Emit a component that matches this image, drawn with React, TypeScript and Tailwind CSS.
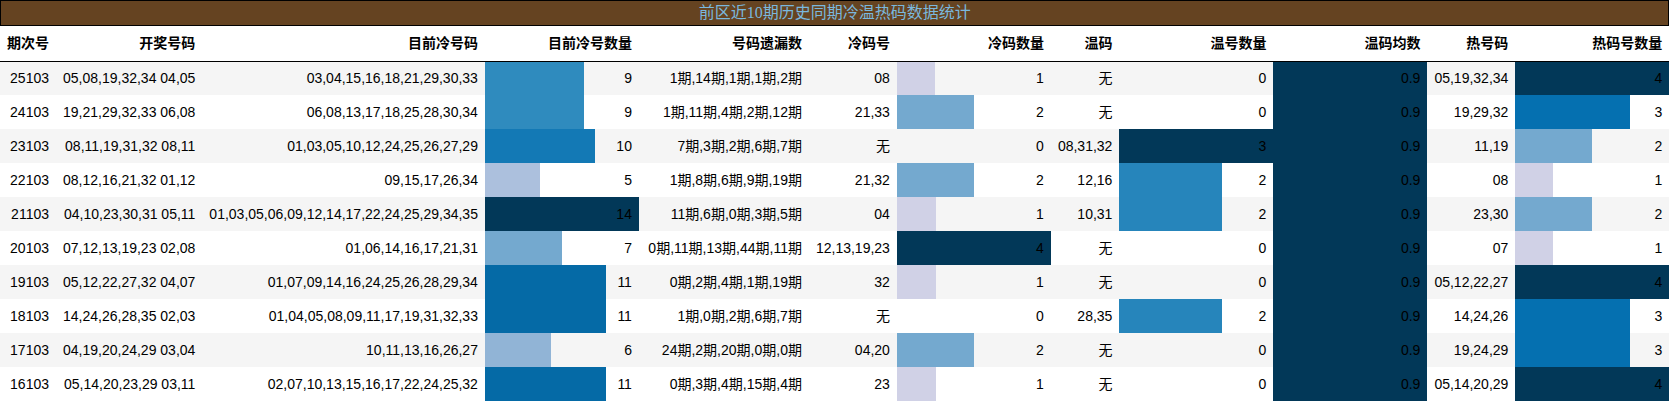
type Row = {
  period: string;
  draw: string;
  coldNums: string;
  coldCount: number;
  missing: string;
  coldCode: string;
  coldCodeCount: number;
  warmCode: string;
  warmCount: number;
  warmAvg: number;
  hotCode: string;
  hotCount: number;
};

const rows: Row[] = [
  { period: "25103", draw: "05,08,19,32,34 04,05", coldNums: "03,04,15,16,18,21,29,30,33", coldCount: 9, missing: "1期,14期,1期,1期,2期", coldCode: "08", coldCodeCount: 1, warmCode: "无", warmCount: 0, warmAvg: 0.9, hotCode: "05,19,32,34", hotCount: 4 },
  { period: "24103", draw: "19,21,29,32,33 06,08", coldNums: "06,08,13,17,18,25,28,30,34", coldCount: 9, missing: "1期,11期,4期,2期,12期", coldCode: "21,33", coldCodeCount: 2, warmCode: "无", warmCount: 0, warmAvg: 0.9, hotCode: "19,29,32", hotCount: 3 },
  { period: "23103", draw: "08,11,19,31,32 08,11", coldNums: "01,03,05,10,12,24,25,26,27,29", coldCount: 10, missing: "7期,3期,2期,6期,7期", coldCode: "无", coldCodeCount: 0, warmCode: "08,31,32", warmCount: 3, warmAvg: 0.9, hotCode: "11,19", hotCount: 2 },
  { period: "22103", draw: "08,12,16,21,32 01,12", coldNums: "09,15,17,26,34", coldCount: 5, missing: "1期,8期,6期,9期,19期", coldCode: "21,32", coldCodeCount: 2, warmCode: "12,16", warmCount: 2, warmAvg: 0.9, hotCode: "08", hotCount: 1 },
  { period: "21103", draw: "04,10,23,30,31 05,11", coldNums: "01,03,05,06,09,12,14,17,22,24,25,29,34,35", coldCount: 14, missing: "11期,6期,0期,3期,5期", coldCode: "04", coldCodeCount: 1, warmCode: "10,31", warmCount: 2, warmAvg: 0.9, hotCode: "23,30", hotCount: 2 },
  { period: "20103", draw: "07,12,13,19,23 02,08", coldNums: "01,06,14,16,17,21,31", coldCount: 7, missing: "0期,11期,13期,44期,11期", coldCode: "12,13,19,23", coldCodeCount: 4, warmCode: "无", warmCount: 0, warmAvg: 0.9, hotCode: "07", hotCount: 1 },
  { period: "19103", draw: "05,12,22,27,32 04,07", coldNums: "01,07,09,14,16,24,25,26,28,29,34", coldCount: 11, missing: "0期,2期,4期,1期,19期", coldCode: "32", coldCodeCount: 1, warmCode: "无", warmCount: 0, warmAvg: 0.9, hotCode: "05,12,22,27", hotCount: 4 },
  { period: "18103", draw: "14,24,26,28,35 02,03", coldNums: "01,04,05,08,09,11,17,19,31,32,33", coldCount: 11, missing: "1期,0期,2期,6期,7期", coldCode: "无", coldCodeCount: 0, warmCode: "28,35", warmCount: 2, warmAvg: 0.9, hotCode: "14,24,26", hotCount: 3 },
  { period: "17103", draw: "04,19,20,24,29 03,04", coldNums: "10,11,13,16,26,27", coldCount: 6, missing: "24期,2期,20期,0期,0期", coldCode: "04,20", coldCodeCount: 2, warmCode: "无", warmCount: 0, warmAvg: 0.9, hotCode: "19,24,29", hotCount: 3 },
  { period: "16103", draw: "05,14,20,23,29 03,11", coldNums: "02,07,10,13,15,16,17,22,24,25,32", coldCount: 11, missing: "0期,3期,4期,15期,4期", coldCode: "23", coldCodeCount: 1, warmCode: "无", warmCount: 0, warmAvg: 0.9, hotCode: "05,14,20,29", hotCount: 4 }
];

// PuBu colour map stops
const PUBU = [
  [255, 247, 251],
  [236, 231, 242],
  [208, 209, 230],
  [166, 189, 219],
  [116, 169, 207],
  [54, 144, 192],
  [5, 112, 176],
  [4, 90, 141],
  [2, 56, 88]
];

function pubu(t: number) {
  const x = Math.min(Math.max(t, 0), 1) * 8;
  const i = Math.min(Math.floor(x), 7);
  const f = x - i;
  const c = PUBU[i].map((v, k) => Math.round(v + (PUBU[i + 1][k] - v) * f));
  return `rgb(${c[0]},${c[1]},${c[2]})`;
}

function barStyle(value: number, max: number) {
  const pct = max > 0 ? (value / max) * 100 : 0;
  if (pct <= 0) return undefined;
  const color = pubu(value / max);
  return { background: `linear-gradient(90deg, ${color} ${pct.toFixed(1)}%, transparent ${pct.toFixed(1)}%)` };
}

const headers = [
  "期次号",
  "开奖号码",
  "目前冷号码",
  "目前冷号数量",
  "号码遗漏数",
  "冷码号",
  "冷码数量",
  "温码",
  "温号数量",
  "温码均数",
  "热号码",
  "热码号数量"
];

const cell = "px-[7px] py-0 text-right whitespace-nowrap align-middle";
const barCell = "w-[154px] min-w-[154px] px-[7px] py-0 text-right whitespace-nowrap align-middle";
const missCell = "w-[170px] min-w-[170px] px-[7px] py-0 text-right whitespace-nowrap align-middle";

function headerClass(i: number) {
  if (i === 3 || i === 6 || i === 8 || i === 9 || i === 11) return barCell;
  if (i === 4) return missCell;
  return cell;
}

export default function App() {
  const maxCold = Math.max(...rows.map((r) => r.coldCount));
  const maxColdCode = Math.max(...rows.map((r) => r.coldCodeCount));
  const maxWarm = Math.max(...rows.map((r) => r.warmCount));
  const maxAvg = Math.max(...rows.map((r) => r.warmAvg));
  const maxHot = Math.max(...rows.map((r) => r.hotCount));

  return (
    <div className="w-max bg-white text-black" style={{ fontFamily: '"Liberation Sans", "Noto Sans CJK SC", sans-serif' }}>
      <div
        className="h-[26px] border border-black bg-[#654321] text-center text-[16px] leading-[24px] text-[#7ab8de]"
        style={{ fontFamily: '"Liberation Serif", "Noto Sans CJK SC", serif' }}
      >
        前区近10期历史同期冷温热码数据统计
      </div>
      <table className="border-collapse text-[14px] leading-normal">
        <thead className="border-b border-black">
          <tr className="h-[35px]">
            {headers.map((h, i) => (
              <th key={h} className={headerClass(i) + " font-bold"}>
                {h}
              </th>
            ))}
          </tr>
        </thead>
        <tbody>
          {rows.map((r, idx) => (
            <tr key={r.period} className={idx % 2 === 0 ? "h-[34px] bg-[#f5f5f5]" : "h-[34px] bg-white"}>
              <td className={cell}>{r.period}</td>
              <td className={cell}>{r.draw}</td>
              <td className={cell}>{r.coldNums}</td>
              <td className={barCell} style={barStyle(r.coldCount, maxCold)}>{r.coldCount}</td>
              <td className={missCell}>{r.missing}</td>
              <td className={cell}>{r.coldCode}</td>
              <td className={barCell} style={barStyle(r.coldCodeCount, maxColdCode)}>{r.coldCodeCount}</td>
              <td className={cell}>{r.warmCode}</td>
              <td className={barCell} style={barStyle(r.warmCount, maxWarm)}>{r.warmCount}</td>
              <td className={barCell} style={barStyle(r.warmAvg, maxAvg)}>{r.warmAvg}</td>
              <td className={cell}>{r.hotCode}</td>
              <td className={barCell} style={barStyle(r.hotCount, maxHot)}>{r.hotCount}</td>
            </tr>
          ))}
        </tbody>
      </table>
    </div>
  );
}
